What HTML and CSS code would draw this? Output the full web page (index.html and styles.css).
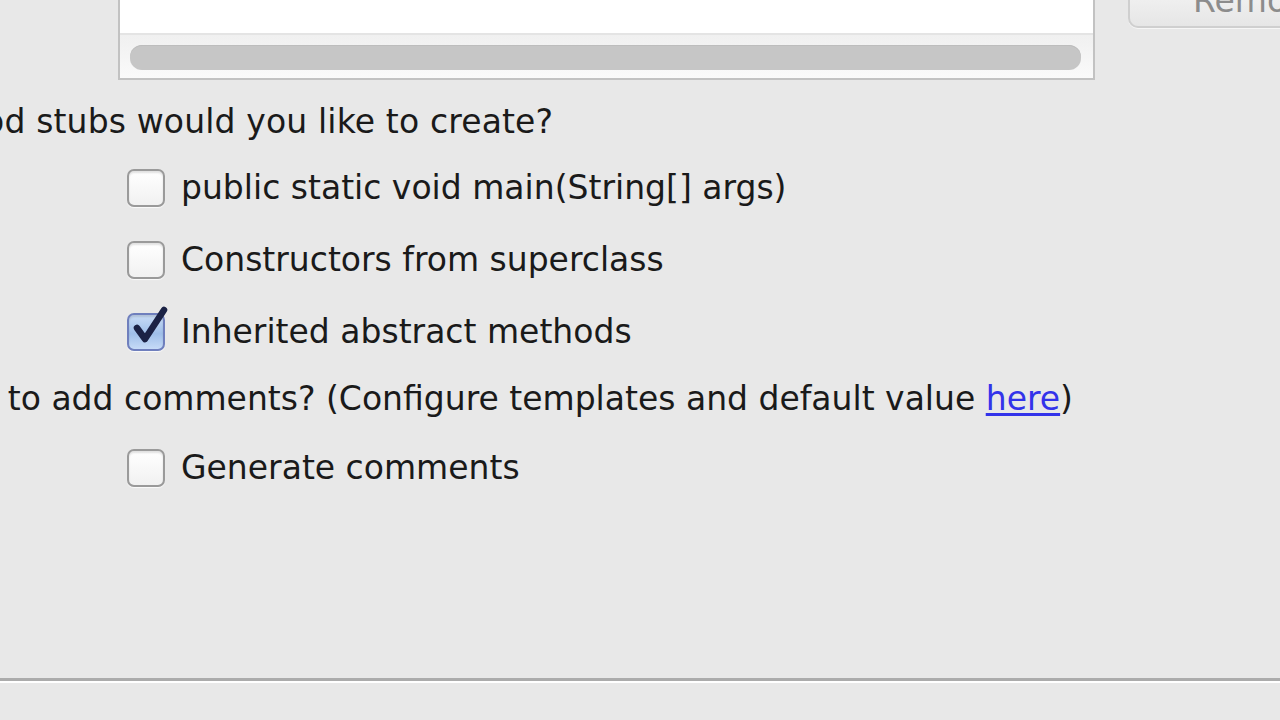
FILE: index.html
```html
<!DOCTYPE html>
<html>
<head>
<meta charset="utf-8">
<link rel="stylesheet" href="styles.css">
</head>
<body>
<div class="page">
  <div class="top">
    <div class="listbox">
      <div class="list-white"></div>
      <div class="hscroll"><div class="thumb"></div></div>
    </div>
    <div class="side">
      <div class="btn"><span class="btn-text">Remove</span></div>
    </div>
  </div>

  <div class="form">
    <div class="label label-stubs">Which method stubs would you like to create?</div>
    <div class="options">
      <div class="row">
        <span class="cb"></span>
        <span class="opt">public static void main(String[] args)</span>
      </div>
      <div class="row">
        <span class="cb"></span>
        <span class="opt">Constructors from superclass</span>
      </div>
      <div class="row">
        <span class="cb cb-checked">
          <svg class="check" width="44" height="46" viewBox="0 0 44 46">
            <path d="M12 23 L20 34 L39 5" fill="none" stroke="#1b2245" stroke-width="6.5" stroke-linecap="round" stroke-linejoin="round"/>
          </svg>
        </span>
        <span class="opt">Inherited abstract methods</span>
      </div>
    </div>
    <div class="label label-comments">Do you want to add comments? (Configure templates and default value <a class="link" href="#">here</a>)</div>
    <div class="options">
      <div class="row">
        <span class="cb"></span>
        <span class="opt">Generate comments</span>
      </div>
    </div>
  </div>

  <div class="separator"></div>
</div>
</body>
</html>
```

FILE: styles.css
```css
html, body {
  margin: 0;
  padding: 0;
  width: 1280px;
  height: 720px;
  overflow: hidden;
  background: #e8e8e8;
}

.page {
  font-family: "DejaVu Sans", "Verdana", sans-serif;
  font-size: 33px;
  line-height: 40px;
  color: #1a1a1a;
  width: 1280px;
  height: 720px;
  overflow: hidden;
}

.top {
  display: flex;
  align-items: flex-start;
  height: 80px;
}

.listbox {
  flex: none;
  margin-left: 118px;
  width: 973px;
  height: 78px;
  border: 2px solid #c2c2c2;
  border-top: none;
  background: #f6f6f6;
  display: flex;
  flex-direction: column;
}

.list-white {
  height: 33px;
  background: #ffffff;
  border-bottom: 2px solid #e4e4e4;
}

.hscroll {
  flex: 1;
  padding: 10px 12px 0 10px;
  background: linear-gradient(#f0f0f0, #fafafa);
}

.thumb {
  height: 25px;
  border-radius: 12px;
  background: #c6c6c6;
  box-shadow: inset 0 1px 0 #bdbdbd;
}

.side {
  margin-left: 33px;
  flex: 1;
  min-width: 0;
}

.btn {
  height: 26px;
  border: 2px solid #cfcfcf;
  border-top: none;
  border-right: none;
  border-bottom-left-radius: 10px;
  background: linear-gradient(#efefef, #e6e6e6);
  overflow: hidden;
  box-shadow: 0 1px 0 #f6f6f6;
}

.btn-text {
  display: block;
  margin-top: -19px;
  padding-left: 63px;
  color: #8c8c8c;
  white-space: nowrap;
}

.form {
  padding-top: 22px;
}

.label {
  white-space: nowrap;
}

.label-stubs {
  margin-left: -216px;
  margin-bottom: 26px;
  letter-spacing: 0.15px;
}

.label-comments {
  margin-left: -211px;
  margin-top: 27px;
  margin-bottom: 29px;
}

.options {
  display: flex;
  flex-direction: column;
  gap: 32px;
  padding-left: 127px;
}

.row {
  display: flex;
  align-items: center;
  height: 40px;
}

.cb {
  position: relative;
  box-sizing: border-box;
  width: 38px;
  height: 38px;
  border-radius: 7px;
  border: 2px solid #9a9a9a;
  background: linear-gradient(#ffffff, #f1f1f1);
  box-shadow: inset 0 2px 2px rgba(0,0,0,0.12), 0 1px 1px rgba(255,255,255,0.8);
  margin-right: 16px;
  flex: none;
}

.cb-checked {
  border-color: #6f7fbd;
  background: linear-gradient(#c9dcf6, #9fbfe9 55%, #c6dbf7);
}

.check {
  position: absolute;
  left: -4px;
  top: -10px;
  overflow: visible;
}

.opt {
  white-space: nowrap;
}

.link {
  color: #3333ea;
  text-decoration: underline;
  text-decoration-thickness: 3px;
  text-underline-offset: 3px;
}

.separator {
  margin-top: 190px;
  height: 3px;
  background: #ababab;
  border-bottom: 2px solid #ffffff;
}
```
